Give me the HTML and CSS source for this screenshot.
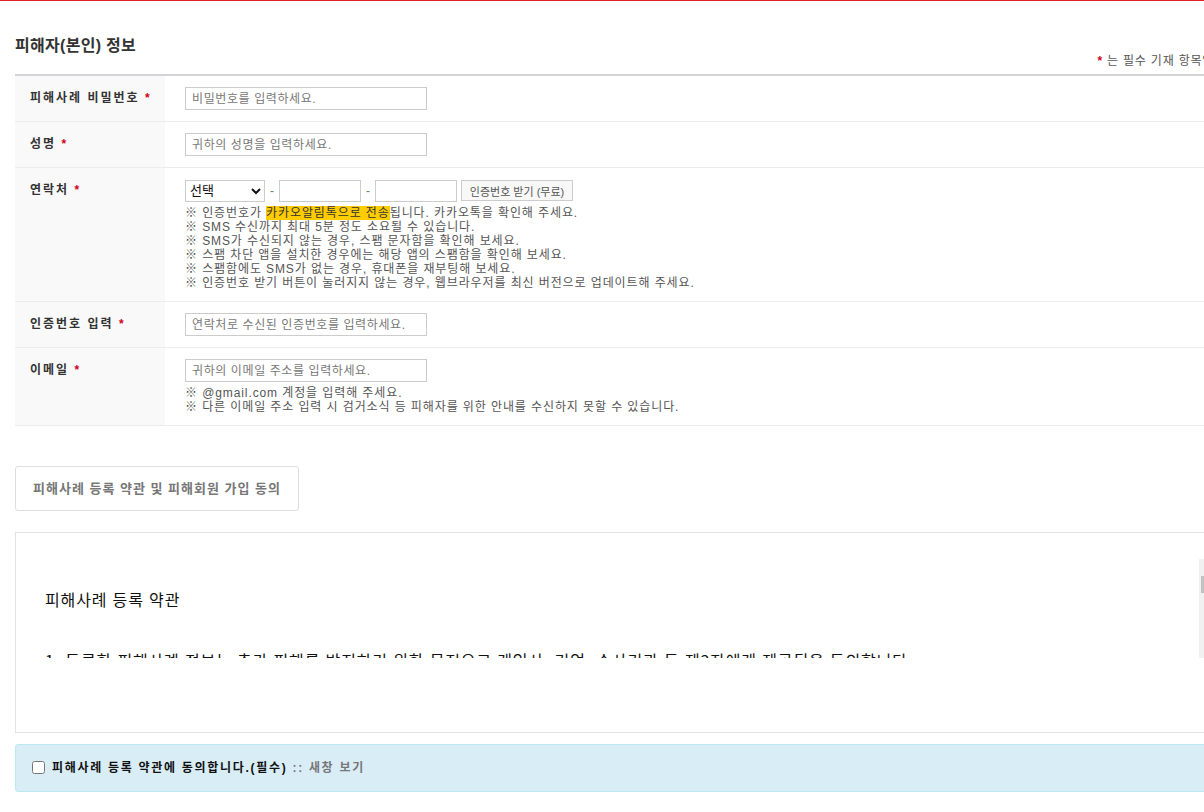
FILE: index.html
```html
<!DOCTYPE html>
<html lang="ko">
<head>
    <meta charset="UTF-8">
    <meta name="viewport" content="width=device-width, initial-scale=1.0">
    <title>피해사례 등록</title>
    <link rel="stylesheet" href="styles.css">
</head>
<body>
    <div class="wrap">
        <div class="sec-head">
            <h2 class="sec-title">피해자(본인) 정보</h2>
            <p class="req-note"><span class="star">*</span> 는 필수 기재 항목입니다.</p>
        </div>

        <table class="form-table">
            <tr>
                <th>피해사례 비밀번호 <span class="star">*</span></th>
                <td><input type="password" class="txt" placeholder="비밀번호를 입력하세요."></td>
            </tr>
            <tr>
                <th>성명 <span class="star">*</span></th>
                <td><input type="text" class="txt" placeholder="귀하의 성명을 입력하세요."></td>
            </tr>
            <tr>
                <th>연락처 <span class="star">*</span></th>
                <td>
                    <div class="phone-row">
                        <select class="sel">
                            <option>선택</option>
                            <option>010</option>
                            <option>011</option>
                            <option>016</option>
                        </select>
                        <span class="dash">-</span>
                        <input type="text" class="txt short">
                        <span class="dash">-</span>
                        <input type="text" class="txt short">
                        <button type="button" class="btn-cert">인증번호 받기 (무료)</button>
                    </div>
                    <p class="hint">
                        ※ 인증번호가 <span class="mark">카카오알림톡으로 전송</span>됩니다. 카카오톡을 확인해 주세요.<br>
                        ※ SMS 수신까지 최대 5분 정도 소요될 수 있습니다.<br>
                        ※ SMS가 수신되지 않는 경우, 스팸 문자함을 확인해 보세요.<br>
                        ※ 스팸 차단 앱을 설치한 경우에는 해당 앱의 스팸함을 확인해 보세요.<br>
                        ※ 스팸함에도 SMS가 없는 경우, 휴대폰을 재부팅해 보세요.<br>
                        ※ 인증번호 받기 버튼이 눌러지지 않는 경우, 웹브라우저를 최신 버전으로 업데이트해 주세요.
                    </p>
                </td>
            </tr>
            <tr>
                <th>인증번호 입력 <span class="star">*</span></th>
                <td><input type="text" class="txt" placeholder="연락처로 수신된 인증번호를 입력하세요."></td>
            </tr>
            <tr>
                <th>이메일 <span class="star">*</span></th>
                <td>
                    <input type="text" class="txt" placeholder="귀하의 이메일 주소를 입력하세요.">
                    <p class="hint">
                        ※ @gmail.com 계정을 입력해 주세요.<br>
                        ※ 다른 이메일 주소 입력 시 검거소식 등 피해자를 위한 안내를 수신하지 못할 수 있습니다.
                    </p>
                </td>
            </tr>
        </table>

        <div class="terms-tab">피해사례 등록 약관 및 피해회원 가입 동의</div>

        <div class="terms-box">
            <div class="terms-frame">
                <h3>피해사례 등록 약관</h3>
                <p>1. 등록한 피해사례 정보는 추가 피해를 방지하기 위한 목적으로 게임사, 기업, 수사기관 등 제3자에게 제공됨을 동의합니다.</p>
                <p>2. 등록한 피해사례 정보는 피해 예방을 위해 공개될 수 있습니다.</p>
                <div class="fake-scroll"><span class="thumb"></span></div>
            </div>
        </div>

        <div class="agree-box">
            <label class="agree-label"><input type="checkbox" class="chk"> 피해사례 등록 약관에 동의합니다.(필수)</label>
            <a href="#" class="pop-link">:: 새창 보기</a>
        </div>
    </div>
</body>
</html>
```

FILE: styles.css
```css
html, body {
    overflow: hidden;
}
body {
    margin: 0;
    border-top: 1px solid #e0202a;
    font-family: "Liberation Sans", "Noto Sans CJK KR", sans-serif;
    font-size: 12px;
    color: #333;
    background: #fff;
}
.wrap {
    width: 1227px;
    margin-left: 15px;
}
.sec-head {
    display: flex;
    justify-content: space-between;
    align-items: flex-end;
    padding-top: 33px;
}
.sec-title {
    margin: 0 0 16px;
    font-size: 16px;
    line-height: 24px;
    font-weight: 600;
    letter-spacing: 0.3px;
    color: #333;
}
.req-note {
    margin: 0 0 5px;
    line-height: 16px;
    color: #555;
    letter-spacing: 0.8px;
}
.star {
    color: #d0021b;
    font-weight: bold;
}
.form-table {
    width: 100%;
    border-collapse: collapse;
    border-top: 2px solid #d3d3d8;
    border-bottom: 1px solid #d8d8d8;
}
.form-table th {
    width: 150px;
    box-sizing: border-box;
    padding: 11px 10px 11px 15px;
    background: #f9f9f9;
    text-align: left;
    vertical-align: top;
    line-height: 23px;
    font-size: 12px;
    font-weight: bold;
    letter-spacing: 2px;
    color: #333;
    border-bottom: 1px solid #ececec;
}
.form-table td {
    padding: 11px 20px;
    vertical-align: top;
    border-bottom: 1px solid #ececec;
}
.txt {
    box-sizing: border-box;
    width: 242px;
    height: 23px;
    padding: 0 6px;
    border: 1px solid #ccc;
    font-family: inherit;
    font-size: 12px;
    letter-spacing: 0.6px;
    color: #333;
    margin: 0;
    display: block;
}
.txt::placeholder {
    color: #777;
}
.txt.short {
    width: 82px;
    height: 22px;
}
.phone-row {
    display: flex;
    align-items: center;
    height: 23px;
}
.sel {
    box-sizing: border-box;
    width: 80px;
    height: 22px;
    border: 1px solid #ccc;
    font-family: inherit;
    font-size: 13px;
    color: #111;
    background: #fff;
    margin: 0;
}
.dash {
    margin: 0 5px;
    color: #777;
}
.btn-cert {
    box-sizing: border-box;
    height: 21px;
    width: 112px;
    margin-left: 4px;
    padding: 0;
    border: 1px solid #ccc;
    background: #f8f8f8;
    font-family: inherit;
    font-size: 11px;
    color: #555;
}
.hint {
    margin: 4px 0 0;
    line-height: 14px;
    color: #555;
    letter-spacing: 0.9px;
}
.mark {
    background: #ffcc00;
    color: #333;
}
.terms-tab {
    display: inline-block;
    margin-top: 40px;
    padding: 0 17px;
    line-height: 43px;
    border: 1px solid #ddd;
    border-radius: 3px;
    font-size: 13px;
    font-weight: bold;
    letter-spacing: 1px;
    color: #777;
}
.terms-box {
    margin-top: 21px;
    padding: 26px 27px 74px 27px;
    border: 1px solid #e3e3e3;
}
.terms-frame {
    position: relative;
    height: 99px;
    overflow: hidden;
    padding: 0 15px 0 2px;
    font-family: "Noto Sans CJK KR", sans-serif;
    letter-spacing: 0.85px;
    color: #111;
}
.terms-frame h3 {
    margin: 30px 0 0;
    font-size: 16px;
    line-height: 20px;
    font-weight: normal;
}
.terms-frame p {
    margin: 39px 0 0;
    font-size: 16px;
    line-height: 24px;
}
.fake-scroll {
    position: absolute;
    top: 0;
    right: 0;
    width: 15px;
    height: 100%;
    background: #f1f1f1;
}
.fake-scroll .thumb {
    position: absolute;
    top: 17px;
    left: 2px;
    width: 11px;
    height: 17px;
    background: #c1c1c1;
}
.agree-box {
    margin-top: 11px;
    padding: 15px 16px;
    line-height: 16px;
    background: #d9edf7;
    border: 1px solid #bce8f1;
    border-radius: 3px;
    font-weight: bold;
    letter-spacing: 1.7px;
}
.agree-label {
    color: #111;
}
.chk {
    margin: 0 2px 0 0;
    vertical-align: -2px;
}
.pop-link {
    color: #777;
    text-decoration: none;
}
```
